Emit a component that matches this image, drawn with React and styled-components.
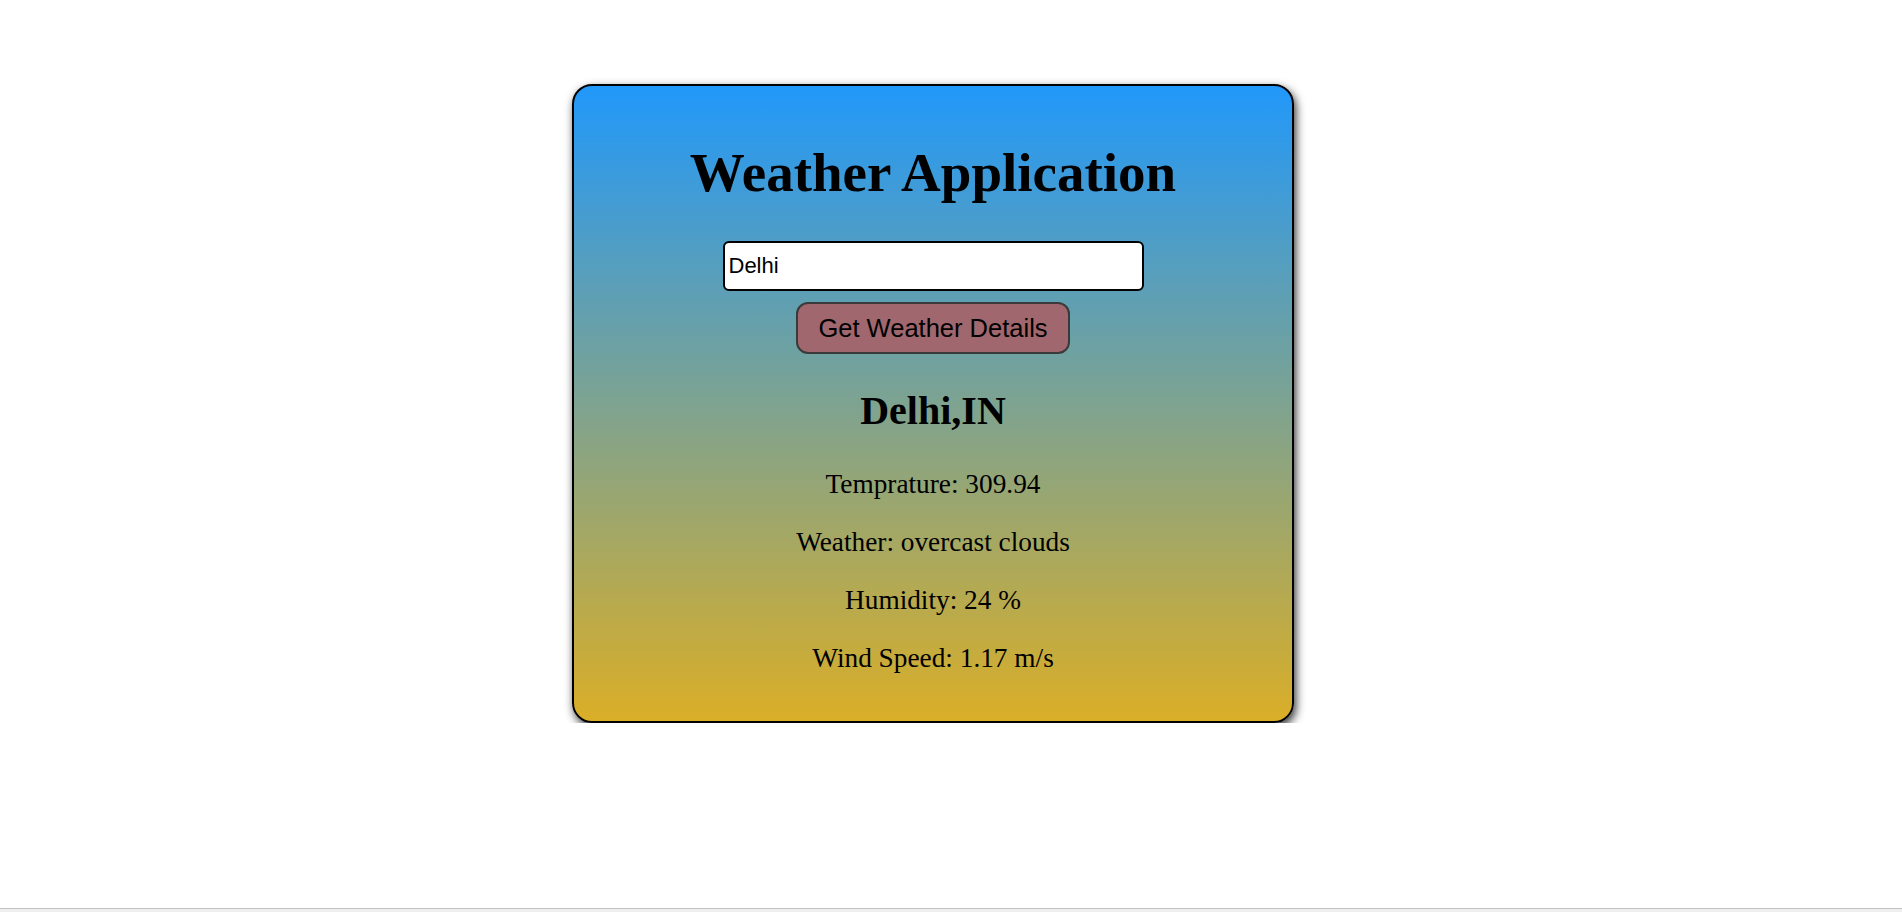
import styled, { createGlobalStyle } from "styled-components";
import { useState } from "react";

const GlobalStyle = createGlobalStyle`
  body {
    margin: 8px;
    background: #fff;
    font-family: "Liberation Serif", "Times New Roman", serif;
  }
`;

function App() {
  const [city, setCity] = useState("Delhi");

  return (
    <>
      <GlobalStyle />
      <Page>
        <Card>
          <Title>Weather Application</Title>
          <Form onSubmit={(e) => e.preventDefault()}>
            <CityInput value={city} onChange={(e) => setCity(e.target.value)} />
            <FetchButton type="submit">Get Weather Details</FetchButton>
          </Form>
          <Place>Delhi,IN</Place>
          <Detail>Temprature: 309.94</Detail>
          <Detail>Weather: overcast clouds</Detail>
          <Detail>Humidity: 24 %</Detail>
          <Detail>Wind Speed: 1.17 m/s</Detail>
        </Card>
      </Page>
      <BottomBar />
    </>
  );
}

const Page = styled.div`
  display: flex;
  justify-content: center;
  padding: 76px 36px 0 0;
`;

const Card = styled.div`
  box-sizing: border-box;
  width: 722px;
  padding: 20px;
  border: 2px solid #000;
  border-radius: 20px;
  text-align: center;
  background: linear-gradient(to bottom, #2198fa, #daae27);
  box-shadow: 2px 4px 10px rgba(0, 0, 0, 0.8);
`;

const Title = styled.h1`
  font-size: 55px;
  font-weight: bold;
  margin: 35px 0 37px;
`;

const Form = styled.form`
  display: flex;
  flex-direction: column;
  align-items: center;
  gap: 11px;
`;

const CityInput = styled.input`
  box-sizing: border-box;
  width: 421px;
  height: 50px;
  padding: 0 4px;
  border: 2px solid #000;
  border-radius: 6px;
  background: #fff;
  font-family: "Liberation Sans", Arial, sans-serif;
  font-size: 22px;
  color: #000;
  outline: none;
`;

const FetchButton = styled.button`
  box-sizing: border-box;
  height: 52px;
  padding: 0 20px;
  border: 2px solid #3a3a3a;
  border-radius: 12px;
  background: #a0676e;
  font-family: "Liberation Sans", Arial, sans-serif;
  font-size: 25.5px;
  color: #000;
  cursor: pointer;
`;

const Place = styled.h2`
  font-size: 40px;
  font-weight: bold;
  margin: 33px 0 35px;
`;

const Detail = styled.p`
  font-size: 27.3px;
  margin: 27px 0;
`;

const BottomBar = styled.div`
  position: fixed;
  left: 0;
  right: 0;
  bottom: 0;
  height: 3px;
  background: #efefef;
  border-top: 1px solid #c2c2c2;
`;

export default App;
